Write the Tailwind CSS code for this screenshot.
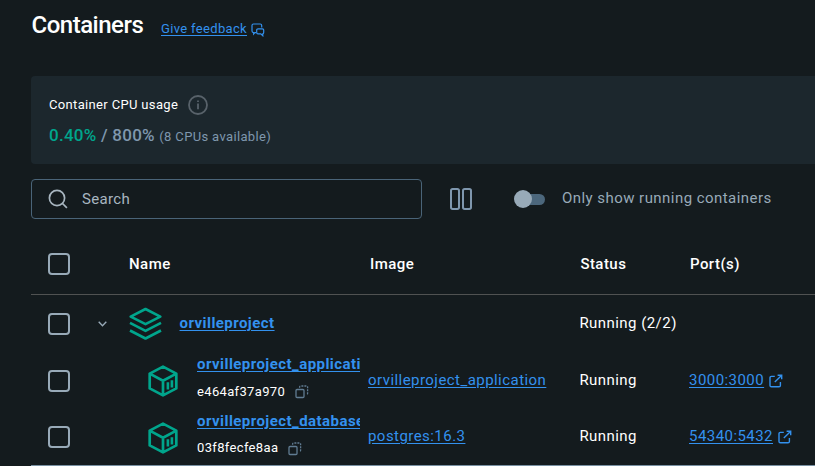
<!DOCTYPE html>
<html lang="en">
<head>
<meta charset="utf-8">
<title>Containers</title>
<script src="https://cdn.jsdelivr.net/npm/@tailwindcss/browser@4"></script>
</head>
<body class="h-[466px] w-[815px] overflow-hidden bg-[#141b1e] font-[Roboto,sans-serif] text-white">
<svg class="hidden">
  <symbol id="cube" viewBox="0 0 30 32"><g fill="none" stroke="currentColor" stroke-width="2.7" stroke-linejoin="round" stroke-linecap="round"><path d="M15 1.6 28.3 8.6V23.4L15 30.4 1.7 23.4V8.6zM1.7 8.6 15 15.8 28.3 8.6M15 15.8V30"/><path stroke-width="2.6" stroke-linecap="butt" d="M19.9 17.2V24.6M23.9 15.2V22.6"/></g></symbol>
  <symbol id="copy" viewBox="0 0 14 14"><g fill="none" stroke="currentColor" stroke-width="1.3"><rect x="1" y="4.5" width="8" height="8" rx="1"/><path stroke-dasharray="2 1" d="M4.6 2.8V2Q4.6 1 5.6 1H11.6Q12.6 1 12.6 2V8.3Q12.6 9.3 11.6 9.3H11"/></g></symbol>
  <symbol id="open" viewBox="0 0 14 14"><path fill="none" stroke="currentColor" stroke-width="1.4" d="M5.8 2.4H2.4Q1 2.4 1 3.8V11.4Q1 12.8 2.4 12.8H10Q11.4 12.8 11.4 11.4V8M8.6 1.2H12.7V5.3M12.5 1.4 5.8 8.1"/></symbol>
</svg>
<main class="flex w-[784px] flex-col ml-[31px]">
  <header class="flex h-[76px] items-start">
    <h1 class="mt-[9px] w-[130px] pl-[0.5px] text-[24px] leading-[32px] font-medium tracking-[-0.5px]">Containers</h1>
    <a class="mt-[19px] flex items-center text-[13px] leading-[20px] tracking-[0.34px] text-[#3391ee]"><span class="underline underline-offset-2">Give feedback</span>
      <svg class="ml-[4px] mt-[1px] h-[14px] w-[14px]" viewBox="0 0 14 14" fill="none" stroke="currentColor" stroke-width="1.2"><path d="M5.2 9.6H4L2.6 11V9.6Q1 9.4 1 8V2.5Q1 1 2.5 1H9.2Q10.7 1 10.7 2.5V4.5"/><path d="M7 5.8H11.4Q12.7 5.8 12.7 7V9.6Q12.7 10.8 11.8 10.9V12.8L9.8 10.9H7Q5.7 10.9 5.7 9.6V7Q5.7 5.8 7 5.8Z"/></svg></a>
  </header>
  <section class="flex h-[88px] flex-col rounded-l-[4px] bg-[#1c272d] pl-[18px] pt-[18px]">
    <div class="flex h-[21px] items-center text-[13px] tracking-[0.34px]"><span>Container CPU usage</span>
      <svg class="ml-[10px] h-5 w-5 text-[#58626a]" viewBox="0 0 20 20" fill="none" stroke="currentColor" stroke-width="1.8"><circle cx="10" cy="10" r="9"/><path d="M10 8.6V14.3M10 5.6V7.1"/></svg></div>
    <div class="mt-[8px] text-[17px] leading-[24px] font-medium tracking-[0.25px] text-[#7f97ae]"><span class="text-[#00a58c]">0.40%</span> / 800% <span class="text-[13px] font-normal tracking-[0.35px]">(8 CPUs available)</span></div>
  </section>
  <div class="mt-[15px] flex h-10 items-center">
    <label class="flex h-10 w-[391px] items-center rounded-[4px] border border-[#4a6478] pl-[16px] text-[#a8b6c0]">
      <svg class="h-[20px] w-[20px]" viewBox="0 0 20 20" fill="none" stroke="currentColor" stroke-width="1.7"><circle cx="9" cy="9" r="7.6"/><path d="m14.5 14.5 4.4 4.4"/></svg>
      <span class="ml-[14px] text-[15px] tracking-[0.35px]">Search</span></label>
    <svg class="ml-[28px] h-[22px] w-[22px] text-[#7f97ae]" viewBox="0 0 22 22" fill="none" stroke="currentColor" stroke-width="2"><rect x="1" y="1" width="8" height="20" rx="1.7"/><rect x="13" y="1" width="8" height="20" rx="1.7"/></svg>
    <div class="ml-[41.5px] flex h-[18px] w-[32px] items-center"><span class="size-[18px] rounded-full bg-[#98aab8] z-10"></span><span class="-ml-[9px] h-[11px] w-[22.5px] rounded-r-full bg-[#4c677c]"></span></div>
    <span class="ml-[16.5px] -mt-[2px] text-[15px] tracking-[0.45px] text-[#98aab8]">Only show running containers</span>
  </div>
  <div class="mt-[15px] grid h-[61px] grid-cols-[98px_241px_210.4px_109.6px_1fr] items-center border-b border-[#505252] text-[15px] font-medium tracking-[0.45px]">
    <i class="ml-[17px] size-[22px] rounded-[4px] border-2 border-[#98aab8]"></i><span>Name</span><span>Image</span><span>Status</span><span>Port(s)</span>
  </div>
  <div class="grid h-[57px] grid-cols-[67px_31px_239px_211px_110px_1fr] items-center text-[15px] tracking-[0.45px]">
    <i class="ml-[17px] size-[22px] rounded-[4px] border-2 border-[#98aab8]"></i>
    <svg class="h-[6px] w-[9px] text-[#98aab8]" viewBox="0 0 9 6" fill="none" stroke="currentColor" stroke-width="1.4"><path d="M.7.8 4.5 4.7 8.3.8"/></svg>
    <div class="flex items-center"><svg class="h-[34px] w-[33px] text-[#00a58c]" viewBox="0 0 33 34" fill="none" stroke="currentColor" stroke-width="2.6" stroke-linejoin="round"><path d="M16.5 2 31.3 9.6 16.5 17.2 1.7 9.6zM1 15.9 16.5 23.9 32 15.9M1 23.5 16.5 31.5 32 23.5"/></svg><a class="ml-[17.5px] font-bold text-[#3391ee] underline underline-offset-2">orvilleproject</a></div>
    <span></span><span class="pl-[0.4px]">Running (2/2)</span>
  </div>
  <div class="grid h-[57px] grid-cols-[116px_50px_171px_211px_110px_1fr] items-center text-[15px] tracking-[0.45px]">
    <i class="ml-[17px] size-[22px] rounded-[4px] border-2 border-[#98aab8]"></i>
    <svg class="ml-[0.5px] h-[32px] w-[30px] text-[#00a58c]"><use href="#cube"/></svg>
    <div class="w-[163px] self-start"><a class="block overflow-hidden whitespace-nowrap font-bold leading-[24px] text-[#3391ee] underline underline-offset-2">orvilleproject_application</a><div class="mt-[6px] flex h-[20px] items-center text-[13px] tracking-[0.34px]">e464af37a970<svg class="ml-[9.5px] h-[14px] w-[14px] text-[#607c92]"><use href="#copy"/></svg></div></div>
    <a class="text-[#3391ee] underline underline-offset-2">orvilleproject_application</a><span class="pl-[0.4px]">Running</span>
    <a class="flex items-center text-[#3391ee]"><span class="underline underline-offset-2">3000:3000</span><svg class="ml-[4.5px] h-[14px] w-[14px]"><use href="#open"/></svg></a>
  </div>
  <div class="grid h-[57px] grid-cols-[116px_50px_171px_211px_110px_1fr] items-center border-b border-[#7890a2] text-[15px] tracking-[0.45px]">
    <i class="ml-[17px] size-[22px] rounded-[4px] border-2 border-[#98aab8]"></i>
    <svg class="ml-[0.5px] mt-px h-[32px] w-[30px] text-[#00a58c]"><use href="#cube"/></svg>
    <div class="w-[163px] self-start"><a class="block overflow-hidden whitespace-nowrap font-bold leading-[24px] text-[#3391ee] underline underline-offset-2">orvilleproject_database</a><div class="mt-[5px] flex h-[20px] items-center text-[13px] tracking-[0.34px]">03f8fecfe8aa<svg class="ml-[9.5px] mt-px h-[14px] w-[14px] text-[#607c92]"><use href="#copy"/></svg></div></div>
    <a class="pb-px text-[#3391ee] underline underline-offset-2">postgres:16.3</a><span class="pb-px pl-[0.4px]">Running</span>
    <a class="flex items-center text-[#3391ee]"><span class="pb-px underline underline-offset-2">54340:5432</span><svg class="ml-[4.5px] h-[14px] w-[14px]"><use href="#open"/></svg></a>
  </div>
</main>
</body>
</html>
